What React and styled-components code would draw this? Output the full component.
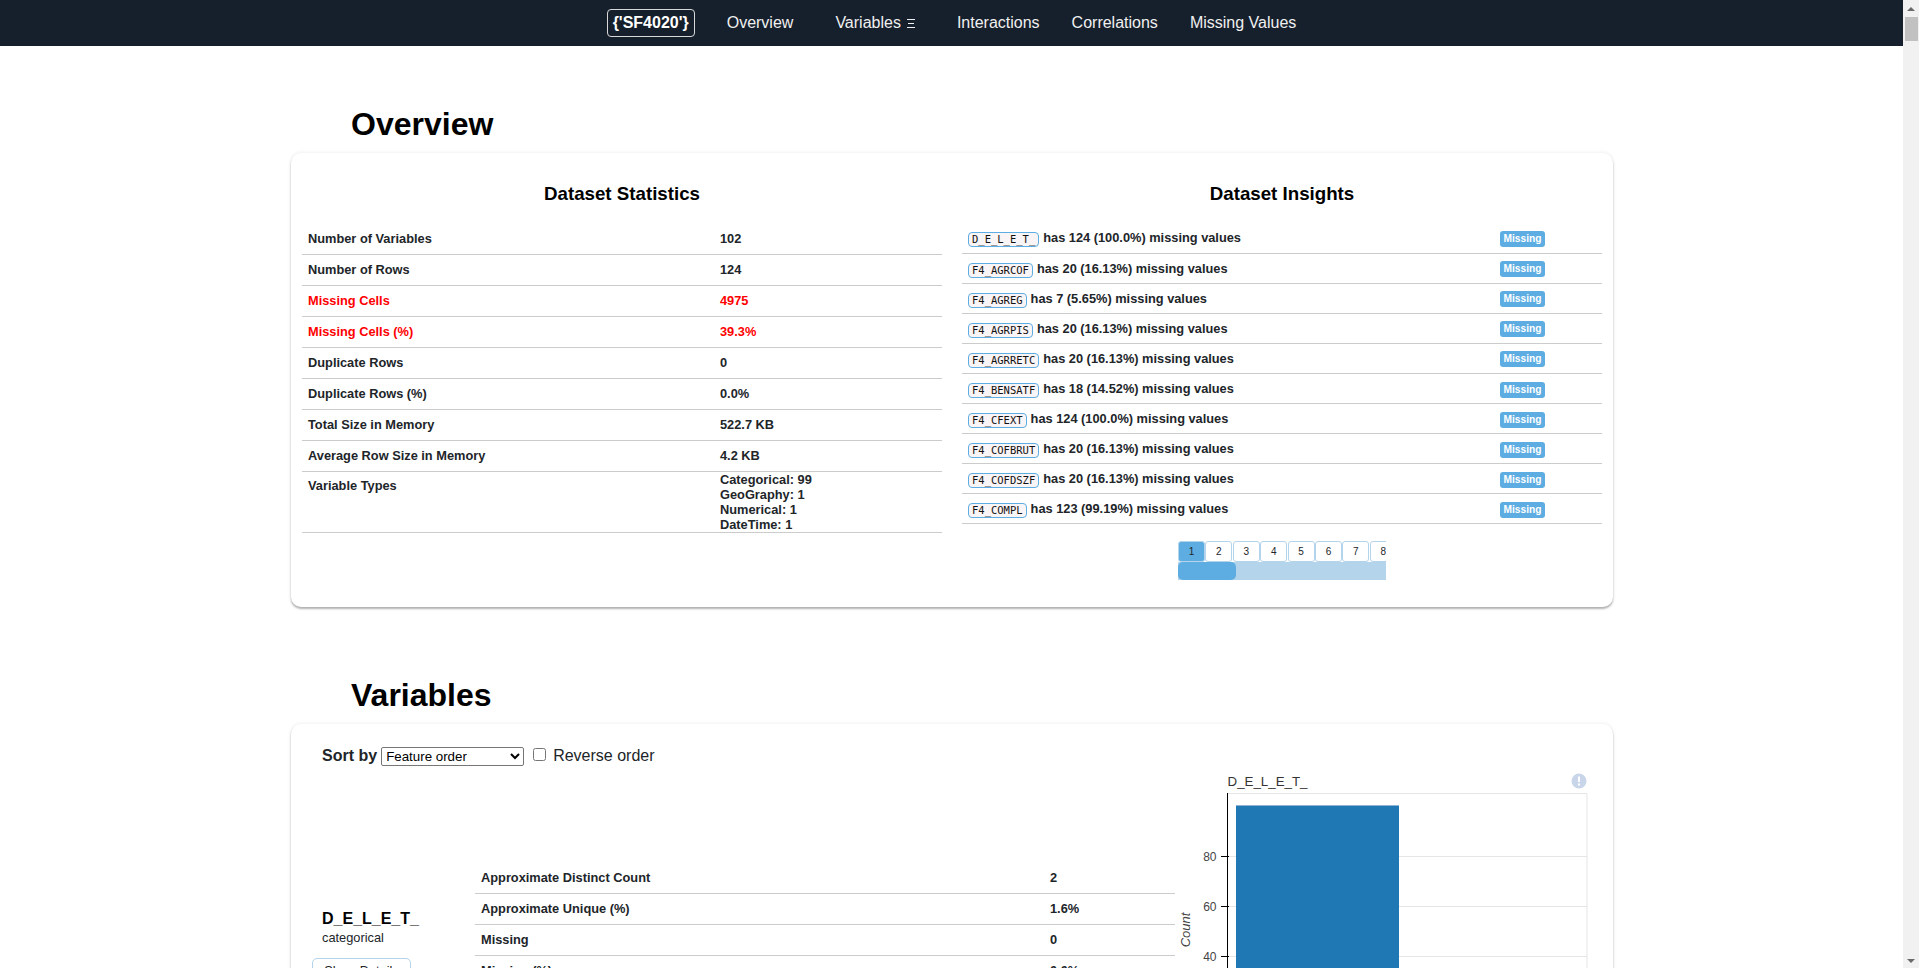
import styled, { createGlobalStyle } from "styled-components";

const GlobalStyle = createGlobalStyle`
  html, body {
    margin: 0;
    padding: 0;
    height: 100%;
    overflow: hidden;
    background: #fff;
  }

  body {
    font-family: "Liberation Sans", Arial, sans-serif;
    color: #212529;
  }
`;

const Shell = styled.div`
  display: flex;
  height: 968px;
  overflow: hidden;
`;

const Main = styled.main`
  flex: 1;
  min-width: 0;
  overflow: hidden;
`;

const Rail = styled.div`
  width: 16px;
  background: #f1f1f1;
  display: flex;
  flex-direction: column;
  align-items: center;
`;

const RailArrow = styled.span`
  width: 0;
  height: 0;
  margin-top: ${(p) => (p.$down ? "auto" : "7px")};
  margin-bottom: ${(p) => (p.$down ? "5px" : "0")};
  border-left: 4px solid transparent;
  border-right: 4px solid transparent;
  border-bottom: ${(p) => (p.$down ? "0" : "4px solid #6a6a6a")};
  border-top: ${(p) => (p.$down ? "4px solid #6a6a6a" : "0")};
`;

const RailThumb = styled.span`
  width: 13px;
  height: 24px;
  margin-top: 6px;
  background: #c1c1c1;
`;

const Nav = styled.nav`
  height: 46px;
  padding-left: 16px;
  background: #161f2c;
  display: flex;
  align-items: center;
  justify-content: center;
`;

const Brand = styled.a`
  box-sizing: border-box;
  width: 88px;
  height: 28px;
  margin-right: 16px;
  border: 1px solid #d8d8d8;
  border-radius: 4px;
  color: #fff;
  font-size: 16px;
  font-weight: 700;
  line-height: 26px;
  text-align: center;
`;

const NavItem = styled.a`
  display: flex;
  align-items: center;
  gap: 6px;
  padding: 0 16px;
  margin-right: ${(p) => (p.$wide ? "10px" : "0")};
  color: #f0f0f0;
  font-size: 16px;
`;

const Container = styled.div`
  width: 1322px;
  margin-left: 291px;
`;

const SectionTitle = styled.h1`
  margin: ${(p) => p.$top}px 0 10px 60px;
  font-size: 32px;
  line-height: 37px;
  font-weight: 700;
  color: #000;
`;

const Card = styled.section`
  box-sizing: border-box;
  background: #fff;
  border-radius: 10px;
  box-shadow: 0 0 4px rgba(0, 0, 0, 0.09), 0 2px 2px rgba(0, 0, 0, 0.28);
`;

const OverviewGrid = styled.div`
  display: grid;
  grid-template-columns: 640px 640px;
  column-gap: 20px;
  padding: 30px 11px 27px;
`;

const Column = styled.div`
  display: flex;
  flex-direction: column;
`;

const ColumnTitle = styled.h2`
  margin: 0 0 19px;
  font-size: 18.72px;
  line-height: 21px;
  font-weight: 700;
  color: #000;
  text-align: center;
`;

const Table = styled.table`
  width: ${(p) => p.$width}px;
  border-collapse: collapse;
  table-layout: fixed;
  font-size: 12.8px;
  font-weight: 700;
`;

const Row = styled.tr`
  height: ${(p) => p.$height}px;
  border-bottom: 1px solid #ccc;
  color: ${(p) => (p.$alert ? "#ff0000" : "#212529")};
`;

const LabelCell = styled.td`
  width: ${(p) => p.$width}px;
  padding: ${(p) => (p.$top ? "6px 6px 0" : "0 6px")};
  vertical-align: ${(p) => (p.$top ? "top" : "middle")};
`;

const ValueCell = styled.td`
  padding: 0 6px;
`;

const InsightCell = styled.td`
  width: 526px;
  padding: 2px 6px 0;
`;

const BadgeCell = styled.td`
  padding: 2px 0 0;
`;

const TypeList = styled.div`
  line-height: 15px;
`;

const VariableName = styled.code`
  display: inline-block;
  box-sizing: border-box;
  height: 15px;
  padding: 0 3px;
  margin-right: 4px;
  border: 1px solid #5dade2;
  border-radius: 4px;
  background: #f9f4f5;
  color: #111;
  font-family: "DejaVu Sans Mono", "Liberation Mono", monospace;
  font-size: 10.5px;
  font-weight: 400;
  line-height: 13px;
  vertical-align: -1px;
`;

const Badge = styled.span`
  display: block;
  width: 45px;
  height: 16px;
  border-radius: 3px;
  background: #5dade2;
  color: #fff;
  font-size: 10.2px;
  font-weight: 700;
  line-height: 16px;
  text-align: center;
`;

const Pager = styled.div`
  width: 208px;
  margin: 17px auto 0;
  overflow: hidden;
`;

const PageButtons = styled.div`
  display: flex;
  height: 21px;
  gap: 0.4px;
`;

const PageButton = styled.span`
  flex: 0 0 27px;
  box-sizing: border-box;
  border: 1px solid #b3d4ea;
  border-radius: 3px;
  background: ${(p) => (p.$active ? "#5dade2" : "#fff")};
  color: #212529;
  font-size: 10px;
  line-height: 19px;
  text-align: center;
`;

const PageTrack = styled.div`
  height: 18px;
  background: #b3d4ea;
`;

const PageThumb = styled.div`
  width: 58px;
  height: 18px;
  border-radius: 5px;
  background: #5dade2;
`;

const SortBar = styled.div`
  display: flex;
  align-items: center;
  height: 20px;
  padding: 22px 0 0 31px;
  font-size: 16px;
`;

const SortLabel = styled.label`
  font-weight: 700;
  margin-right: 4px;
  color: #212529;
`;

const SortSelect = styled.select`
  box-sizing: border-box;
  width: 143px;
  height: 19px;
  margin: 0 9px 0 0;
  padding: 0;
  font-family: "Liberation Sans", Arial, sans-serif;
  font-size: 13.33px;
  background: #fff;
  border: 1px solid #767676;
  border-radius: 2px;
`;

const SortCheck = styled.input`
  width: 13px;
  height: 13px;
  margin: 0 7px 3px 0;
`;

const VariableRow = styled.div`
  display: flex;
  align-items: flex-start;
  padding: 4px 0 0 21px;
`;

const VariableInfo = styled.div`
  width: 163px;
  margin-top: 140px;
`;

const InfoName = styled.div`
  padding-left: 10px;
  font-size: 16px;
  line-height: 18px;
  font-weight: 700;
  color: #000;
`;

const InfoType = styled.div`
  padding-left: 10px;
  margin-top: 2px;
  font-size: 12.8px;
  line-height: 15px;
`;

const DetailsButton = styled.button`
  box-sizing: border-box;
  display: block;
  width: 99px;
  height: 25px;
  margin-top: 13px;
  border: 1px solid #b3d4ea;
  border-radius: 5px;
  background: #fff;
  color: #212529;
  font-family: "Liberation Sans", Arial, sans-serif;
  font-size: 12.8px;
`;

const VariableStats = styled.div`
  margin-top: 92px;
`;

const Chart = styled.svg`
  display: block;
  flex: none;
  margin-left: 5px;
`;

const ChartTitle = styled.text`
  font-size: 13.33px;
  fill: #333;
`;

const TickLabel = styled.text`
  font-size: 12px;
  fill: #444;
  text-anchor: end;
`;

const AxisLabel = styled.text`
  font-size: 13px;
  font-style: italic;
  fill: #444;
  text-anchor: middle;
`;

const navItems = [
  { label: "Overview", wide: true },
  { label: "Variables", wide: true, menu: true },
  { label: "Interactions" },
  { label: "Correlations" },
  { label: "Missing Values" },
];

const stats = [
  ["Number of Variables", "102"],
  ["Number of Rows", "124"],
  ["Missing Cells", "4975", true],
  ["Missing Cells (%)", "39.3%", true],
  ["Duplicate Rows", "0"],
  ["Duplicate Rows (%)", "0.0%"],
  ["Total Size in Memory", "522.7 KB"],
  ["Average Row Size in Memory", "4.2 KB"],
];

const insights = [
  ["D_E_L_E_T_", "124 (100.0%)"],
  ["F4_AGRCOF", "20 (16.13%)"],
  ["F4_AGREG", "7 (5.65%)"],
  ["F4_AGRPIS", "20 (16.13%)"],
  ["F4_AGRRETC", "20 (16.13%)"],
  ["F4_BENSATF", "18 (14.52%)"],
  ["F4_CFEXT", "124 (100.0%)"],
  ["F4_COFBRUT", "20 (16.13%)"],
  ["F4_COFDSZF", "20 (16.13%)"],
  ["F4_COMPL", "123 (99.19%)"],
];

const variableStats = [
  ["Approximate Distinct Count", "2"],
  ["Approximate Unique (%)", "1.6%"],
  ["Missing", "0"],
  ["Missing (%)", "0.0%"],
];

const ticks = [
  { y: 86.5, label: "80" },
  { y: 136.5, label: "60" },
  { y: 186.5, label: "40" },
  { y: 236.5, label: "20" },
];

function MenuIcon() {
  return (
    <svg width="8" height="9" viewBox="0 0 8 9">
      <path d="M0 .5h8M1 4.5h6M0 8.5h8" stroke="#f0f0f0" strokeWidth="1" />
    </svg>
  );
}

function BarChart() {
  return (
    <Chart width="410" height="300" viewBox="0 0 410 300">
      <ChartTitle x="47.5" y="15.5">
        D_E_L_E_T_
      </ChartTitle>
      <circle cx="399" cy="11" r="7.5" fill="#c9d6ea" />
      <path d="M399 6.5v5.5M399 13.5v2" stroke="#fff" strokeWidth="2" />
      <path d="M47.5 23.5H407V262H47.5" fill="none" stroke="#e5e5e5" />
      {ticks.map((tick) => (
        <g key={tick.label}>
          <path d={`M47 ${tick.y}H407`} stroke="#e5e5e5" />
          <path d={`M41 ${tick.y}h8`} stroke="#000" />
          <TickLabel x="36.5" y={tick.y + 4.5}>
            {tick.label}
          </TickLabel>
        </g>
      ))}
      <path d="M47.5 23V262" stroke="#000" />
      <rect x="56" y="35" width="163" height="227" fill="#1f77b4" />
      <rect x="56" y="35" width="163" height="1" fill="#8fb2d2" />
      <AxisLabel transform="translate(10 160) rotate(-90)">Count</AxisLabel>
    </Chart>
  );
}

export default function App() {
  return (
    <>
      <GlobalStyle />
      <Shell>
        <Main>
          <Nav>
            <Brand>{"{'SF4020'}"}</Brand>
            {navItems.map((item) => (
              <NavItem key={item.label} $wide={item.wide}>
                {item.label}
                {item.menu && <MenuIcon />}
              </NavItem>
            ))}
          </Nav>

          <Container>
            <SectionTitle $top={60}>Overview</SectionTitle>
            <Card>
              <OverviewGrid>
                <Column>
                  <ColumnTitle>Dataset Statistics</ColumnTitle>
                  <Table $width={640}>
                    <tbody>
                      {stats.map(([label, value, alert]) => (
                        <Row key={label} $height={31} $alert={alert}>
                          <LabelCell $width={400}>{label}</LabelCell>
                          <ValueCell>{value}</ValueCell>
                        </Row>
                      ))}
                      <Row $height={61}>
                        <LabelCell $width={400} $top>
                          Variable Types
                        </LabelCell>
                        <ValueCell>
                          <TypeList>
                            <div>Categorical: 99</div>
                            <div>GeoGraphy: 1</div>
                            <div>Numerical: 1</div>
                            <div>DateTime: 1</div>
                          </TypeList>
                        </ValueCell>
                      </Row>
                    </tbody>
                  </Table>
                </Column>

                <Column>
                  <ColumnTitle>Dataset Insights</ColumnTitle>
                  <Table $width={640}>
                    <tbody>
                      {insights.map(([name, count]) => (
                        <Row key={name} $height={30.1}>
                          <InsightCell>
                            <VariableName>{name}</VariableName>
                            has {count} missing values
                          </InsightCell>
                          <BadgeCell>
                            <Badge>Missing</Badge>
                          </BadgeCell>
                        </Row>
                      ))}
                    </tbody>
                  </Table>
                  <Pager>
                    <PageButtons>
                      {[1, 2, 3, 4, 5, 6, 7, 8].map((page) => (
                        <PageButton key={page} $active={page === 1}>
                          {page}
                        </PageButton>
                      ))}
                    </PageButtons>
                    <PageTrack>
                      <PageThumb />
                    </PageTrack>
                  </Pager>
                </Column>
              </OverviewGrid>
            </Card>

            <SectionTitle $top={70}>Variables</SectionTitle>
            <Card>
              <SortBar>
                <SortLabel>Sort by</SortLabel>
                <SortSelect defaultValue="feature">
                  <option value="feature">Feature order</option>
                </SortSelect>
                <SortCheck type="checkbox" />
                Reverse order
              </SortBar>
              <VariableRow>
                <VariableInfo>
                  <InfoName>D_E_L_E_T_</InfoName>
                  <InfoType>categorical</InfoType>
                  <DetailsButton>Show Details</DetailsButton>
                </VariableInfo>
                <VariableStats>
                  <Table $width={700}>
                    <tbody>
                      {variableStats.map(([label, value]) => (
                        <Row key={label} $height={31}>
                          <LabelCell $width={557}>{label}</LabelCell>
                          <ValueCell>{value}</ValueCell>
                        </Row>
                      ))}
                    </tbody>
                  </Table>
                </VariableStats>
                <BarChart />
              </VariableRow>
            </Card>
          </Container>
        </Main>
        <Rail>
          <RailArrow />
          <RailThumb />
          <RailArrow $down />
        </Rail>
      </Shell>
    </>
  );
}
